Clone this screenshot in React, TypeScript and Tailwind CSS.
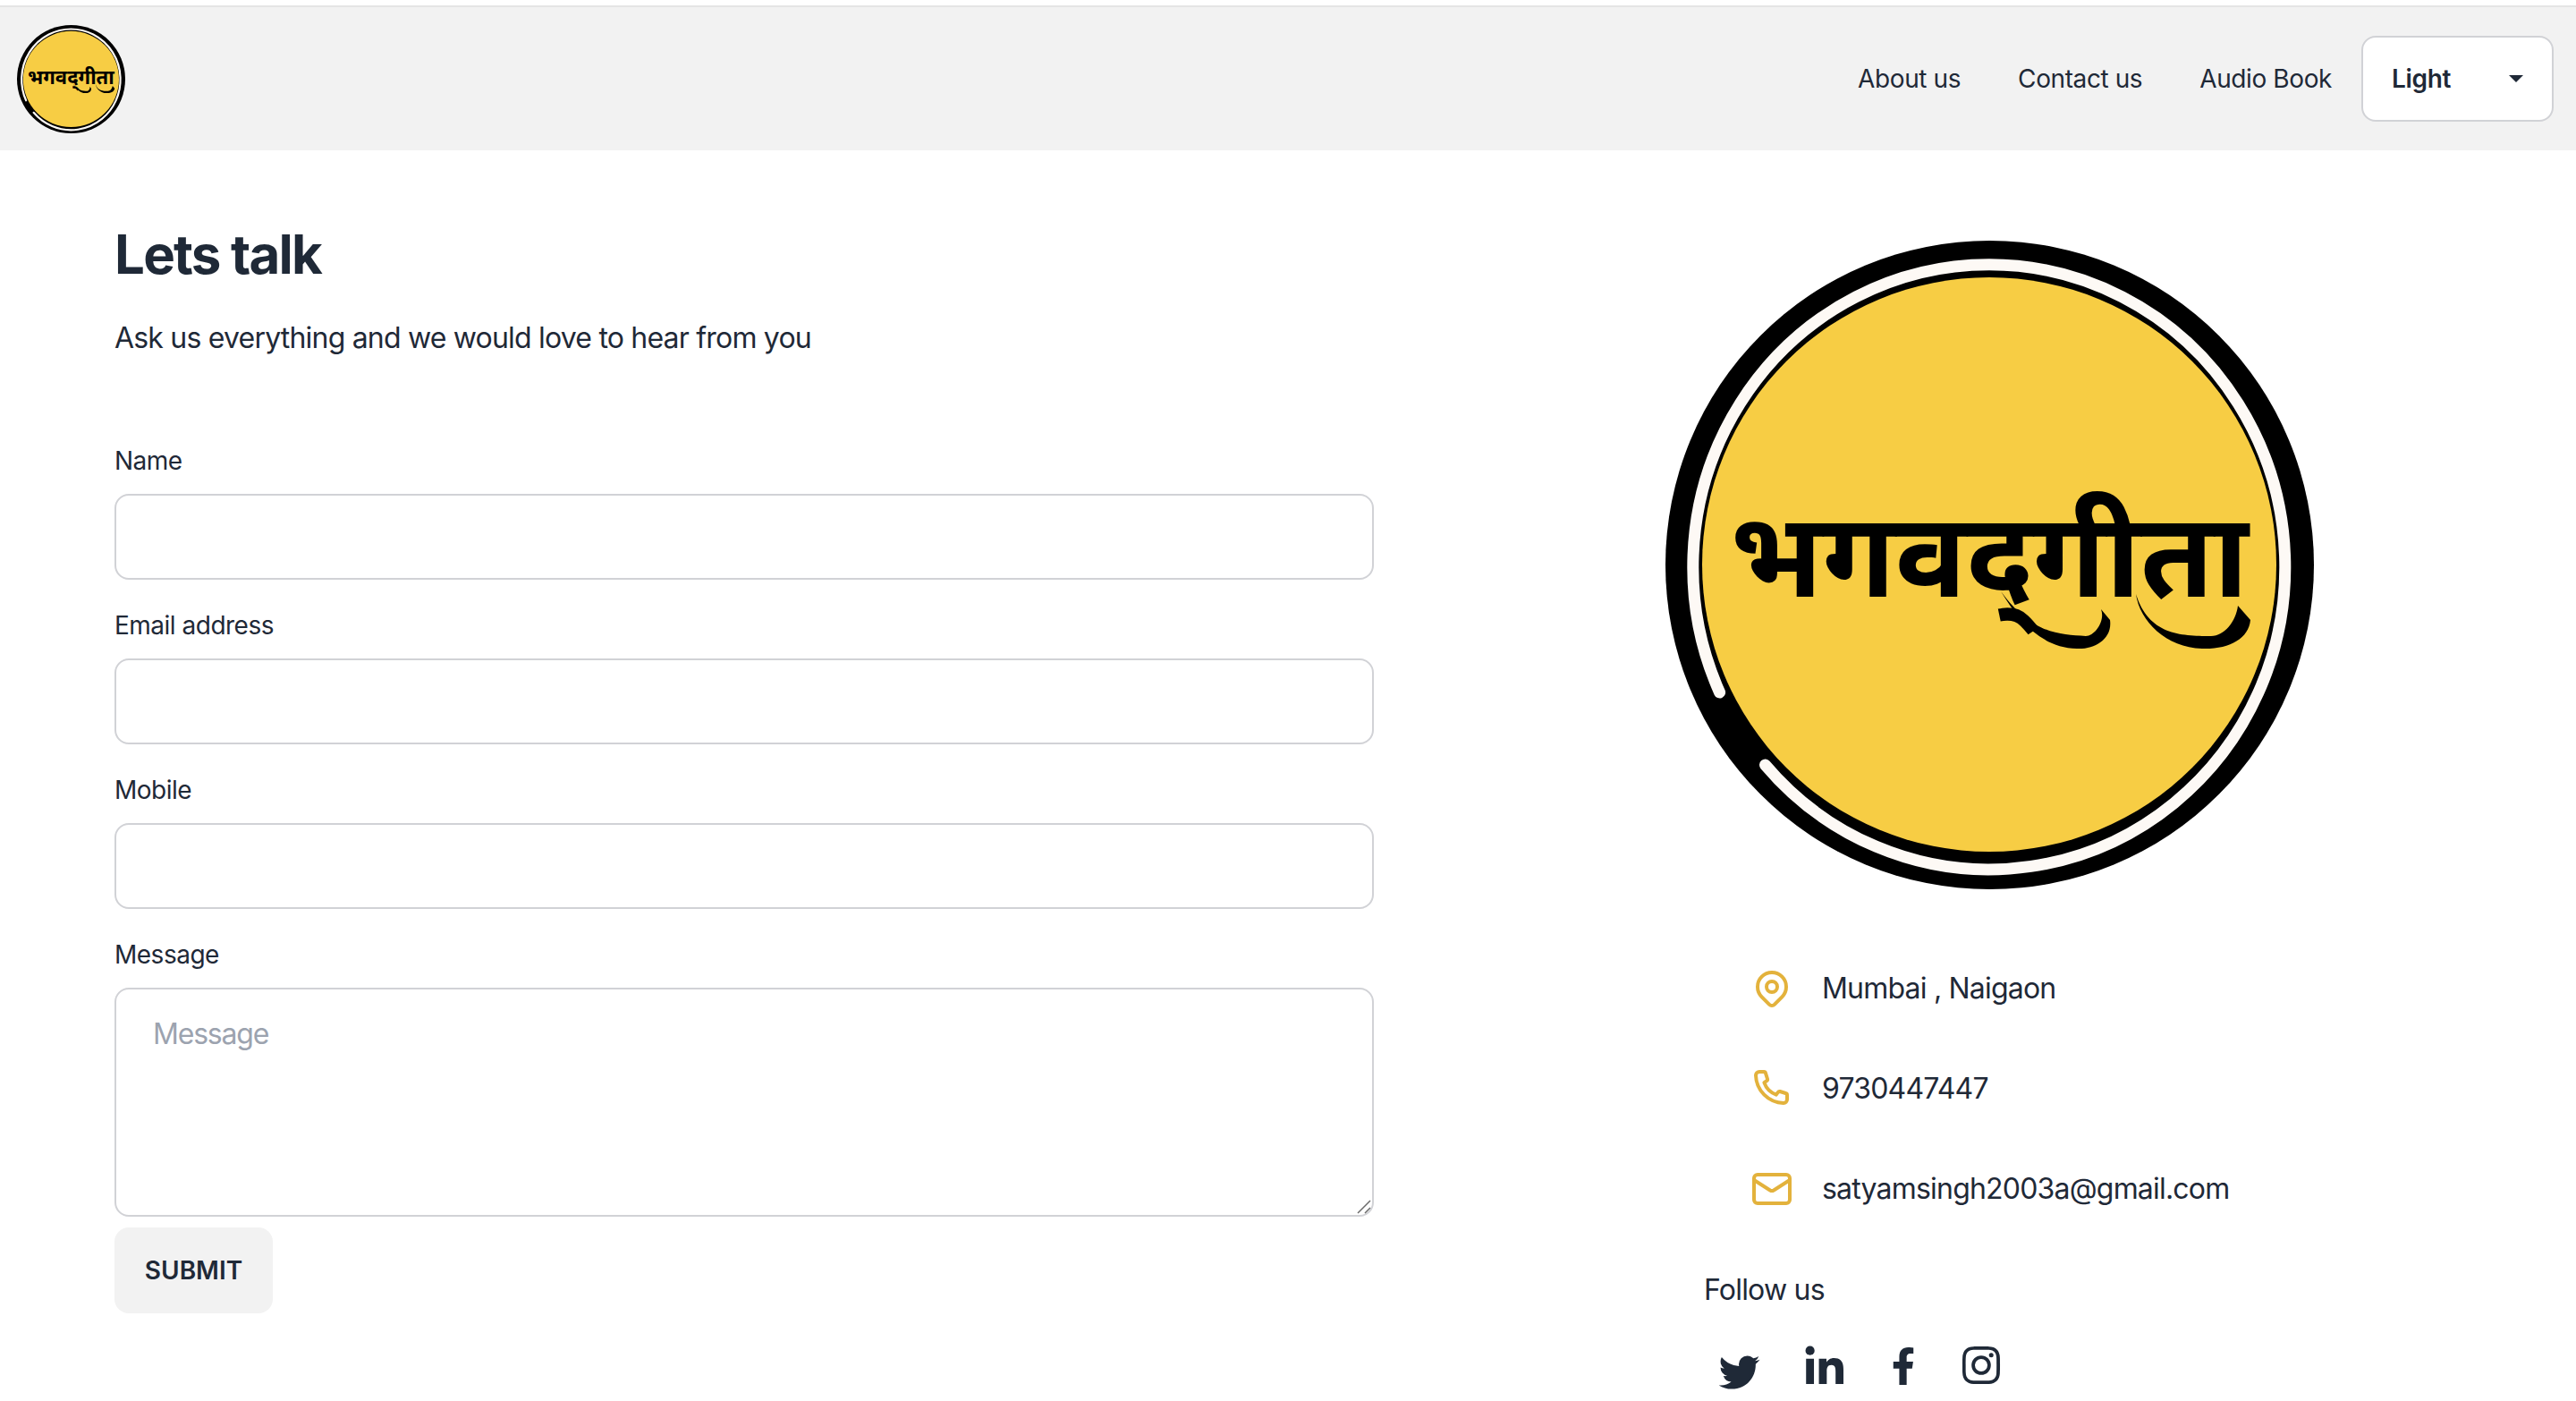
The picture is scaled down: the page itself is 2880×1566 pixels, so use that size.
import { Mail } from "lucide-react";
import { BiLogoInstagram, BiLogoLinkedin, BiLogoTwitter } from "react-icons/bi";
import { FaFacebookF } from "react-icons/fa";

// round logo, real text on the yellow disc, the two swashes are just decoration
function Logo({ className }: { className: string }) {
  return (
    <svg viewBox="0 0 725 725" className={className}>
      <circle cx="362.5" cy="362.5" r="362.5" fill="#000" />
      <path d="M 60.6 505 A 331 338 0 1 1 111.5 586" fill="none" stroke="#fdf9f5" strokeWidth="13" strokeLinecap="round" />
      <circle cx="362" cy="362" r="321" fill="#f7cd44" />
      <text
        x="362"
        y="398"
        textAnchor="middle"
        fontSize="132"
        fontWeight="700"
        fontFamily="'Noto Sans', 'DejaVu Sans', sans-serif"
        fill="#000"
      >
        {"भगवद्\u200Cगीता"}
      </text>
      <path d="M 375 392 C 410 440 440 440 470 442 C 480 442 492 425 487 412 L 497 424 C 500 445 480 457 460 456 C 420 455 395 425 375 392 Z" fill="#000" />
      <path d="M 526 395 C 540 440 575 442 610 442 C 625 442 638 425 640 408 L 654 424 C 652 445 630 457 600 456 C 560 455 530 425 526 395 Z" fill="#000" />
    </svg>
  );
}

function Field({ label }: { label: string }) {
  return (
    <div className="flex flex-col">
      <label className="h-[76px] pt-[19px] text-[28px] leading-[40px] tracking-[-0.5px]">{label}</label>
      <input className="h-[96px] w-full rounded-2xl border-2 border-[#d1d2d6] bg-white px-8 text-[32px] outline-none" />
    </div>
  );
}

const iconClass = "h-12 w-12 shrink-0";

const contacts = [
  {
    text: "Mumbai , Naigaon",
    icon: (
      <svg viewBox="0 0 24 24" className={iconClass} fill="none" stroke="#e3b23c" strokeWidth="2" strokeLinecap="round" strokeLinejoin="round">
        <circle cx="12" cy="11" r="3" />
        <path d="M17.657 16.657l-4.243 4.243a2 2 0 0 1 -2.827 0l-4.244 -4.243a8 8 0 1 1 11.314 0z" />
      </svg>
    ),
  },
  {
    text: "9730447447",
    icon: (
      <svg viewBox="0 0 24 24" className={iconClass} fill="none" stroke="#e3b23c" strokeWidth="2" strokeLinecap="round" strokeLinejoin="round">
        <path d="M5 2.500h2.500a1 1 0 0 1 1 .8l1 3.200a1 1 0 0 1 -.4 1.100l-1.400 1a11 11 0 0 0 6.700 6.700l1 -1.400a1 1 0 0 1 1.100 -.4l3.200 1a1 1 0 0 1 .8 1v2.500a2 2 0 0 1 -2 2a16 16 0 0 1 -15.500 -15.500a2 2 0 0 1 2 -2z" />
      </svg>
    ),
  },
  { text: "satyamsingh2003a@gmail.com", icon: <Mail className={`${iconClass} text-[#e3b23c]`} strokeWidth={2} /> },
];

export default function App() {
  return (
    <div className="flex min-h-[1566px] flex-col bg-white font-['Inter',sans-serif] text-[#1f2937]">
      <nav className="mt-[6px] flex h-[162px] items-center justify-between border-t-2 border-[#e5e5e5] bg-[#f2f2f2] pl-[19px] pr-[25px]">
        <Logo className="h-[121px] w-[121px]" />
        <div className="flex items-center">
          <ul className="flex items-center gap-[64px] pr-[33px] text-[28px] tracking-[-0.4px]">
            <li>About us</li>
            <li>Contact us</li>
            <li>Audio Book</li>
          </ul>
          <div className="flex h-[96px] w-[215px] items-center justify-between rounded-2xl border-2 border-[#d1d2d6] bg-white pl-[32px] pr-[32px] text-[28px] font-semibold tracking-[-0.3px]">
            <span>Light</span>
            <span className="h-0 w-0 border-x-[8px] border-t-[8px] border-x-transparent border-t-[#1f2937]" />
          </div>
        </div>
      </nav>

      <main className="grid grid-cols-[1408px_1fr] px-[128px]">
        <section>
          <h1 className="mt-[80px] text-[60px] font-bold leading-[72px] tracking-[-1.8px]">Lets talk</h1>
          <p className="mt-[34px] text-[32px] leading-[48px] tracking-[-0.8px]">Ask us everything and we would love to hear from you</p>
          <form className="mt-[74px]">
            <Field label="Name" />
            <div className="mt-[12px]"><Field label="Email address" /></div>
            <div className="mt-[12px]"><Field label="Mobile" /></div>
            <div className="mt-[12px] flex flex-col">
              <label className="h-[76px] pt-[19px] text-[28px] leading-[40px] tracking-[-0.5px]">Message</label>
              <div className="relative h-[256px]">
                <textarea
                  placeholder="Message"
                  className="h-full w-full resize-none rounded-2xl border-2 border-[#d1d2d6] bg-white px-[41px] py-[26px] text-[32px] leading-[48px] tracking-[-1.2px] outline-none placeholder:text-[#9ca3af]"
                />
                <svg viewBox="0 0 16 16" className="absolute bottom-[3px] right-[3px] h-4 w-4" stroke="#6b6b6b" strokeWidth="1.5">
                  <path d="M1 15 L15 1 M9 15 L15 9" />
                </svg>
              </div>
            </div>
            <button type="button" className="mt-[12px] block h-[96px] w-[177px] rounded-2xl bg-[#f2f2f2] text-[28px] font-semibold">
              SUBMIT
            </button>
          </form>
        </section>

        <aside className="flex flex-col pl-[326px]">
          <Logo className="mt-[101px] h-[725px] w-[725px]" />
          <ul className="mt-[87px] flex flex-col gap-[64px] pl-[95px]">
            {contacts.map((c) => (
              <li key={c.text} className="flex h-[48px] items-center gap-[32px] text-[32px] tracking-[-0.8px]">
                {c.icon}
                {c.text}
              </li>
            ))}
          </ul>
          <p className="ml-[43px] mt-[65px] text-[32px] leading-[48px] tracking-[-0.8px]">Follow us</p>
          <div className="ml-[55px] mt-[32px] flex items-start gap-[33px]">
            <BiLogoTwitter className="mt-[8px] h-14 w-14" />
            <BiLogoLinkedin className="ml-[6px] h-14 w-14" />
            <FaFacebookF className="ml-[13px] mt-[8px] h-[42px] w-[28px]" />
            <BiLogoInstagram className="ml-[12px] h-14 w-14" />
          </div>
        </aside>
      </main>
    </div>
  );
}
